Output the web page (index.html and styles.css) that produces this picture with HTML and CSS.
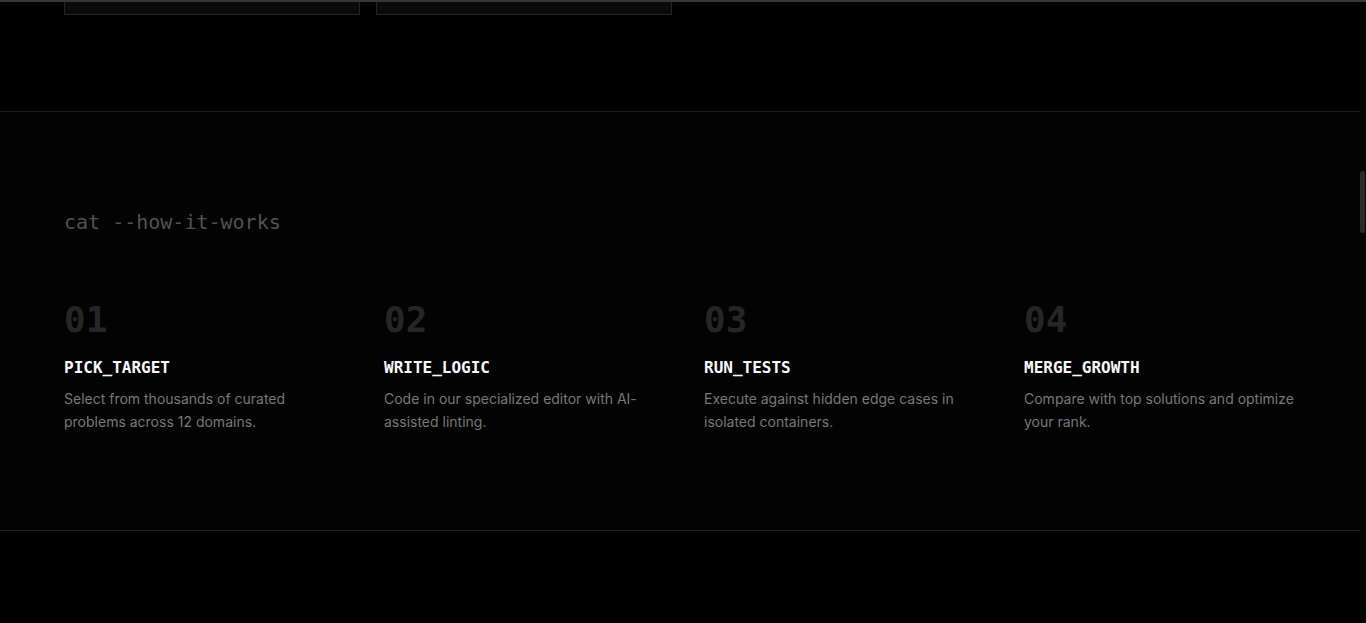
FILE: index.html
```html
<!DOCTYPE html>
<html lang="en">
<head>
<meta charset="UTF-8">
<meta name="viewport" content="width=device-width, initial-scale=1.0">
<title>How it works</title>
<link rel="stylesheet" href="styles.css">
</head>
<body>

<div class="top-edge"></div>

<div class="page">
    <main class="content">

        <!-- Final tarjetas de la sección anterior -->
        <section class="cards-tail">
            <div class="card-row">
                <div class="card"></div>
                <div class="card"></div>
            </div>
        </section>

        <!-- Cómo funciona -->
        <section class="how">
            <h2 class="how-title">cat --how-it-works</h2>
            <ol class="steps">
                <li class="step">
                    <span class="step-num">01</span>
                    <h3>PICK_TARGET</h3>
                    <p>Select from thousands of curated problems across 12 domains.</p>
                </li>
                <li class="step">
                    <span class="step-num">02</span>
                    <h3>WRITE_LOGIC</h3>
                    <p>Code in our specialized editor with AI-assisted linting.</p>
                </li>
                <li class="step">
                    <span class="step-num">03</span>
                    <h3>RUN_TESTS</h3>
                    <p>Execute against hidden edge cases in isolated containers.</p>
                </li>
                <li class="step">
                    <span class="step-num">04</span>
                    <h3>MERGE_GROWTH</h3>
                    <p>Compare with top solutions and optimize your rank.</p>
                </li>
            </ol>
        </section>

        <section class="next"></section>
    </main>

    <!-- Barra de desplazamiento -->
    <div class="scroll-track">
        <div class="scroll-thumb"></div>
    </div>
</div>

</body>
</html>
```

FILE: styles.css
```css
/* Base */
html, body {
    margin: 0;
    padding: 0;
    height: 100%;
    overflow: hidden;
    background: #000;
}

body {
    font-family: "Inter", "Noto Sans", sans-serif;
    color: #fafafa;
    display: flex;
    flex-direction: column;
}

.top-edge {
    height: 2px;
    background: #35353a;
    flex-shrink: 0;
}

.page {
    display: flex;
    flex: 1;
    min-height: 0;
}

.content {
    flex: 1;
    min-width: 0;
}

/* Tarjetas (parte inferior visible) */
.cards-tail {
    padding: 0 64px 96px;
    border-bottom: 1px solid #1c1c1c;
}

.card-row {
    display: grid;
    grid-template-columns: repeat(4, 1fr);
    gap: 16px;
}

.card {
    height: 12px;
    background: #0a0a0a;
    border: 1px solid #262626;
    border-top: none;
}

/* Cómo funciona */
.how {
    padding: 96px 64px;
    border-bottom: 1px solid #222;
    background: #030303;
}

.how-title {
    margin: 0 0 64px;
    font-family: "DejaVu Sans Mono", monospace;
    font-size: 20px;
    line-height: 28px;
    font-weight: 400;
    color: #525252;
}

.steps {
    list-style: none;
    margin: 0;
    padding: 0;
    display: grid;
    grid-template-columns: repeat(4, 1fr);
    gap: 48px;
}

.step-num {
    display: block;
    font-family: "DejaVu Sans Mono", monospace;
    font-size: 36px;
    line-height: 40px;
    font-weight: 700;
    color: #262626;
    margin-bottom: 16px;
}

.step h3 {
    margin: 0 0 7px;
    font-family: "DejaVu Sans Mono", monospace;
    font-size: 16px;
    line-height: 24px;
    font-weight: 700;
    color: #fafafa;
}

.step p {
    margin: 0 0 1px;
    font-size: 14px;
    line-height: 23px;
    color: #787878;
}

/* Barra lateral */
.scroll-track {
    width: 6px;
    background: #050505;
    flex-shrink: 0;
}

.scroll-thumb {
    margin-top: 169px;
    width: 5px;
    height: 62px;
    border-radius: 3px;
    background: #2a2a2a;
}
```
